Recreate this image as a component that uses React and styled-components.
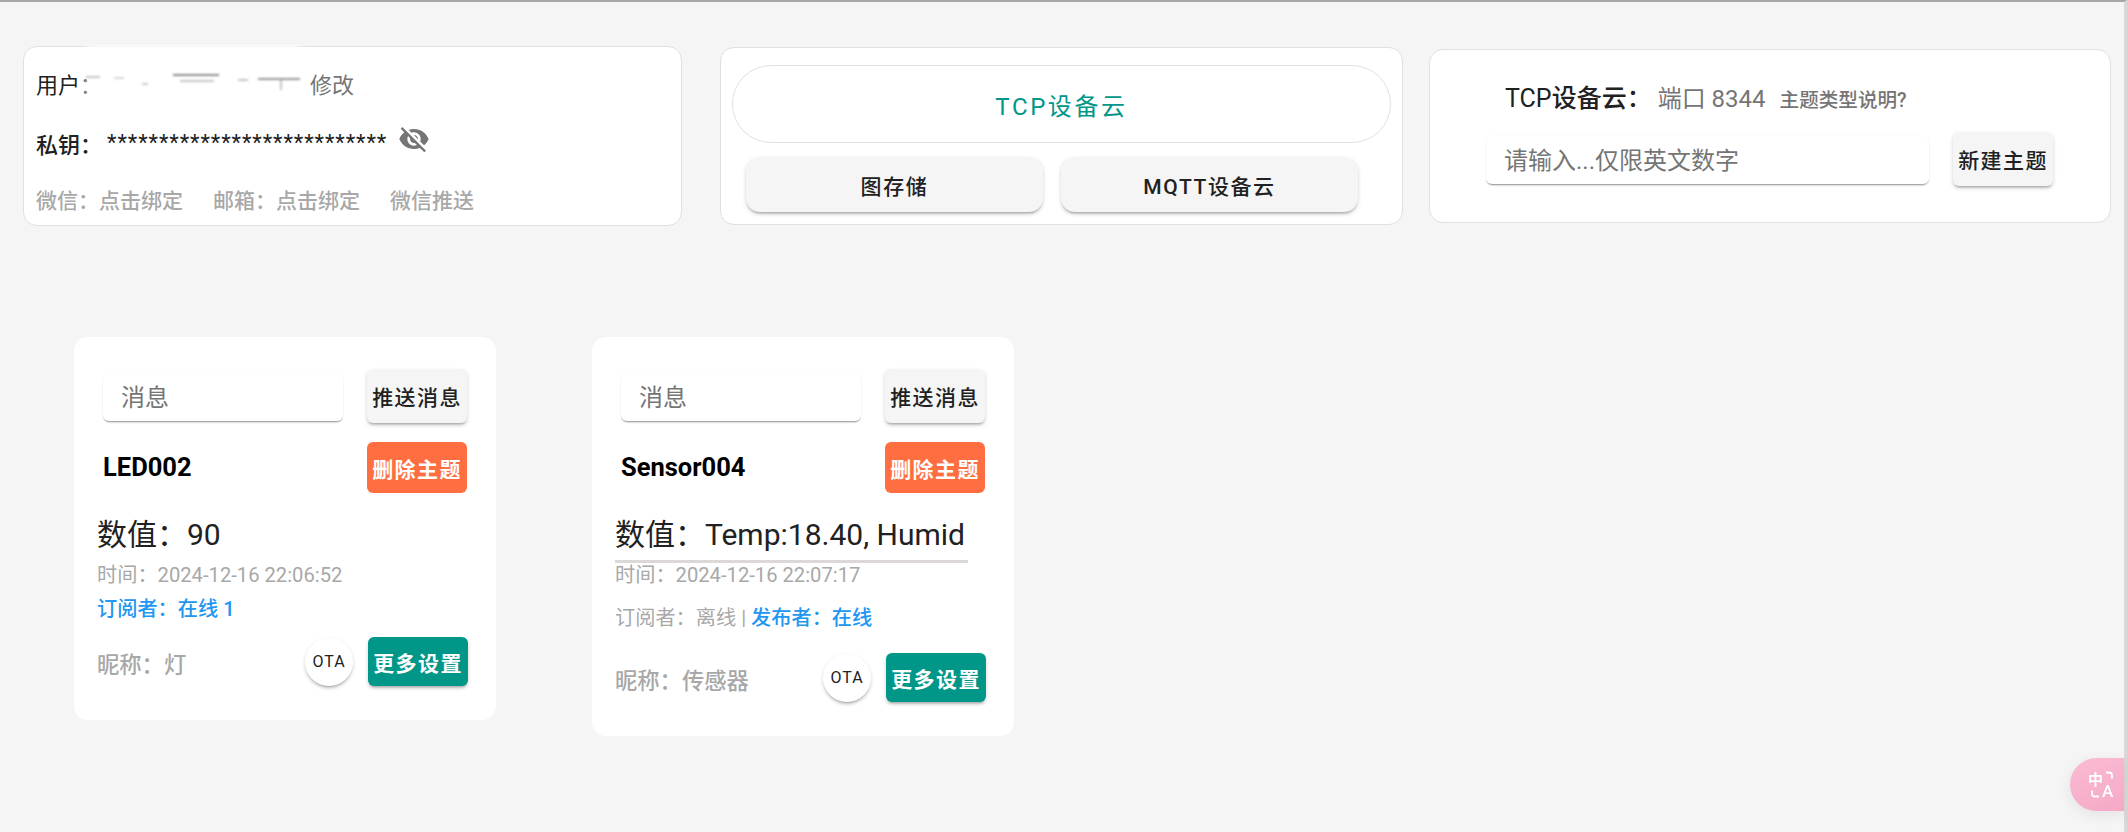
import React from "react";
import styled, { createGlobalStyle } from "styled-components";

const GlobalStyle = createGlobalStyle`
  html, body {
    margin: 0;
    padding: 0;
    height: 100%;
    overflow: hidden;
    background: #f5f5f5;
  }
  body {
    font-family: Roboto, "Noto Sans CJK SC", sans-serif;
    color: #212121;
  }
  input, button {
    font-family: inherit;
  }
`;

const Page = styled.div`
  box-sizing: border-box;
  height: 832px;
  border-top: 2px solid #a8a8a8;
  border-right: 3px solid #dcd8d8;
  background: #f5f5f5;
`;

const TopRow = styled.div`
  display: grid;
  grid-template-columns: repeat(3, 708px);
  align-items: center;
  height: 180px;
  margin-top: 44px;
`;

const TopCell = styled.div`
  padding: ${(p) => p.$pad};
`;

const Panel = styled.div`
  position: relative;
  box-sizing: border-box;
  height: ${(p) => p.$height}px;
  background: #fff;
  border: 1px solid #e0e0e0;
  border-radius: 14px;
`;

const AccountPanel = styled(Panel)`
  padding: 13px 12px;
`;

const AccountLine = styled.div`
  display: flex;
  align-items: center;
  height: 46px;
  margin-bottom: ${(p) => p.$gap}px;
  font-size: 22px;
  font-weight: ${(p) => p.$weight || 400};
`;

const UserGap = styled.span`
  width: 208px;
`;

const GrayLink = styled.span`
  color: #757575;
`;

const Smudge = styled.svg`
  position: absolute;
  left: 56px;
  top: -2px;
  width: 226px;
  height: 58px;
`;

const KeyStars = styled.span`
  margin: 0 0 0 5px;
  font-size: 22px;
  font-weight: 400;
  letter-spacing: 0.9px;
  line-height: 1;
`;

const EyeIcon = styled.svg`
  width: 32px;
  height: 32px;
  margin: -8px 0 0 11px;
  fill: #757575;
`;

const BindRow = styled.div`
  display: flex;
  gap: 30px;
  font-size: 21px;
  font-weight: 500;
  color: #a8a8a8;
`;

const CloudPanel = styled(Panel)`
  padding: 17px 11px 0;
`;

const PillTab = styled.div`
  display: flex;
  align-items: center;
  justify-content: center;
  height: 78px;
  border: 1px solid #e0e0e0;
  box-sizing: border-box;
  border-radius: 39px;
  color: #009688;
  font-size: 24px;
  letter-spacing: 2.6px;
`;

const TabRow = styled.div`
  display: flex;
  gap: 18px;
  margin: 14px 0 0 14px;
`;

const TabButton = styled.button`
  width: 297px;
  height: 55px;
  border: none;
  border-radius: 14px;
  background: #f5f5f5;
  color: #212121;
  font-size: 21px;
  font-weight: 500;
  letter-spacing: 1.6px;
  box-shadow: 0 3px 3px -2px rgba(0, 0, 0, 0.3), 0 2px 4px rgba(0, 0, 0, 0.16);
`;

const CreatePanel = styled(Panel)`
  padding: 28px 0 0 56px;
`;

const CreateTitle = styled.div`
  display: flex;
  align-items: baseline;
  height: 38px;
  margin-left: 19px;
  font-size: 25px;
  font-weight: 500;
`;

const TcpLetters = styled.span`
  font-weight: 400;
`;

const PortText = styled.span`
  margin-left: 6px;
  color: #757575;
  font-size: 24px;
  font-weight: 400;
`;

const TypeHelp = styled.span`
  margin-left: 14px;
  color: #757575;
  font-size: 19.6px;
  font-weight: 500;
`;

const CreateRow = styled.div`
  display: flex;
  align-items: center;
  gap: 24px;
  margin-top: 16px;
`;

const TextField = styled.input`
  box-sizing: border-box;
  width: ${(p) => p.$width}px;
  height: 48px;
  margin-top: 2px;
  padding: 2px 0 0 18px;
  border: none;
  border-radius: 6px;
  outline: none;
  background: #fff;
  font-size: 24px;
  box-shadow: 0 2px 2px -1px rgba(0, 0, 0, 0.45), 0 0 2px rgba(0, 0, 0, 0.06);

  &::placeholder {
    color: #757575;
    opacity: 1;
  }
`;

const ActionButton = styled.button`
  box-sizing: border-box;
  flex: none;
  width: 100px;
  height: ${(p) => p.$height || 54}px;
  padding: 0;
  border: none;
  border-radius: 6px;
  background: ${(p) => p.$bg || "#f5f5f5"};
  color: ${(p) => p.$fg || "#212121"};
  font-size: 21px;
  font-weight: ${(p) => (p.$fg ? 700 : 500)};
  letter-spacing: 1.4px;
  white-space: nowrap;
  box-shadow: ${(p) =>
    p.$flat
      ? "none"
      : "0 3px 3px -2px rgba(0, 0, 0, 0.3), 0 2px 4px rgba(0, 0, 0, 0.16)"};
`;

const TopicRow = styled.div`
  display: flex;
  align-items: flex-start;
  gap: 96px;
  margin: 111px 0 0 74px;
`;

const TopicCard = styled.div`
  box-sizing: border-box;
  width: 422px;
  padding: 32px 28px 0 23px;
  height: ${(p) => p.$height}px;
  background: #fff;
  border-radius: 14px;
`;

const MessageRow = styled.div`
  display: flex;
  align-items: center;
  justify-content: space-between;
  margin: 0 1px 0 6px;
`;

const TitleRow = styled(MessageRow)`
  margin-top: 19px;
`;

const TopicName = styled.div`
  padding-bottom: 1px;
  font-size: 25.5px;
  font-weight: 700;
  color: #000;
`;

const ValueBox = styled.div`
  box-sizing: border-box;
  width: 353px;
  height: ${(p) => (p.$scroll ? 48 : 40)}px;
  margin-top: 22px;
  font-size: 30px;
  line-height: 39px;
  white-space: nowrap;
  overflow: hidden;
  border-bottom: ${(p) => (p.$scroll ? "3px solid #dcd8d8" : "none")};
`;

const TimeLine = styled.div`
  margin-top: ${(p) => (p.$scroll ? -2 : 6)}px;
  height: 28px;
  line-height: 28px;
  font-size: 20.2px;
  color: #a8a8a8;
`;

const StatusLine = styled.div`
  margin-top: ${(p) => p.$top}px;
  height: 28px;
  line-height: 28px;
  font-size: 20.2px;
  font-weight: 400;
  color: #a8a8a8;
`;

const Online = styled.span`
  color: #2196f3;
  font-weight: 500;
`;

const BottomRow = styled.div`
  display: flex;
  align-items: center;
  margin-top: ${(p) => p.$top}px;
`;

const NickName = styled.div`
  flex: 1;
  padding-top: 2px;
  font-size: 22.3px;
  font-weight: 500;
  color: #a8a8a8;
`;

const OtaButton = styled.button`
  width: 48px;
  height: 48px;
  margin-right: 15px;
  padding: 0;
  border: none;
  border-radius: 50%;
  background: #fff;
  color: #212121;
  font-size: 16px;
  letter-spacing: 1px;
  box-shadow: 0 3px 3px -2px rgba(0, 0, 0, 0.3), 0 2px 4px rgba(0, 0, 0, 0.16);
`;

const TranslateBall = styled.div`
  position: fixed;
  right: 3px;
  top: 758px;
  width: 54px;
  height: 53px;
  display: flex;
  align-items: center;
  padding-left: 18px;
  box-sizing: border-box;
  border-radius: 27px 0 0 27px;
  background: linear-gradient(160deg, #fabbd3, #f5a9c6);
  box-shadow: 0 4px 14px rgba(0, 0, 0, 0.08);
`;

const TranslateIcon = styled.svg`
  width: 28px;
  height: 27px;
  overflow: visible;
  fill: #fff;
`;

const TopicInfo = ({ name, value, time, scroll, height, status, statusTop, nick, bottomTop }) => (
  <TopicCard $height={height}>
    <MessageRow>
      <TextField $width={240} placeholder="消息" />
      <ActionButton>推送消息</ActionButton>
    </MessageRow>
    <TitleRow>
      <TopicName>{name}</TopicName>
      <ActionButton $flat $height={51} $bg="#ff6e40" $fg="#fff">删除主题</ActionButton>
    </TitleRow>
    <ValueBox $scroll={scroll}>数值：{value}</ValueBox>
    <TimeLine $scroll={scroll}>时间：{time}</TimeLine>
    <StatusLine $top={statusTop}>{status}</StatusLine>
    <BottomRow $top={bottomTop}>
      <NickName>昵称：{nick}</NickName>
      <OtaButton>OTA</OtaButton>
      <ActionButton $height={49} $bg="#009688" $fg="#fff">更多设置</ActionButton>
    </BottomRow>
  </TopicCard>
);

export default function App() {
  return (
    <Page>
      <GlobalStyle />
      <TopRow>
        <TopCell $pad="0 26px 0 23px">
          <AccountPanel $height={180}>
            <Smudge viewBox="0 0 226 58">
              <defs>
                <filter id="soft"><feGaussianBlur stdDeviation="1.1" /></filter>
                <filter id="wide"><feGaussianBlur stdDeviation="3" /></filter>
              </defs>
              <rect x="6" y="0" width="214" height="54" fill="#fff" filter="url(#wide)" />
              <g filter="url(#soft)" fill="#8c8c8c">
                <rect x="6" y="31" width="14" height="2" opacity="0.5" />
                <rect x="34" y="32" width="10" height="2" opacity="0.35" />
                <rect x="62" y="38" width="6" height="2" opacity="0.45" />
                <rect x="93" y="29" width="46" height="2" />
                <rect x="100" y="35" width="34" height="2" opacity="0.5" />
                <rect x="158" y="34" width="10" height="2" opacity="0.5" />
                <rect x="178" y="33" width="42" height="2" opacity="0.9" />
                <rect x="200" y="35" width="2" height="10" opacity="0.5" />
              </g>
            </Smudge>
            <AccountLine $gap={14}>
              用户：<UserGap /><GrayLink>修改</GrayLink>
            </AccountLine>
            <AccountLine $gap={18} $weight={500}>
              私钥：
              <KeyStars>***************************</KeyStars>
              <EyeIcon viewBox="0 0 24 24">
                <path d="M12 7c2.76 0 5 2.24 5 5 0 .65-.13 1.26-.36 1.83l2.92 2.92c1.51-1.26 2.7-2.89 3.43-4.75-1.73-4.39-6-7.5-11-7.5-1.4 0-2.74.25-3.98.7l2.16 2.16C10.74 7.13 11.35 7 12 7zM2 4.27l2.28 2.28.46.46C3.08 8.3 1.78 10.02 1 12c1.73 4.39 6 7.5 11 7.5 1.55 0 3.03-.3 4.38-.84l.42.42L19.73 22 21 20.73 3.27 3 2 4.27zM7.53 9.8l1.55 1.55c-.05.21-.08.43-.08.65 0 1.66 1.34 3 3 3 .22 0 .44-.03.65-.08l1.55 1.55c-.67.33-1.41.53-2.2.53-2.76 0-5-2.24-5-5 0-.79.2-1.53.53-2.2zm4.31-.78l3.15 3.15.02-.16c0-1.66-1.34-3-3-3l-.17.01z" />
              </EyeIcon>
            </AccountLine>
            <BindRow>
              <span>微信：点击绑定</span>
              <span>邮箱：点击绑定</span>
              <span>微信推送</span>
            </BindRow>
          </AccountPanel>
        </TopCell>
        <TopCell $pad="0 13px 0 12px">
          <CloudPanel $height={178}>
            <PillTab>TCP设备云</PillTab>
            <TabRow>
              <TabButton>图存储</TabButton>
              <TabButton>MQTT设备云</TabButton>
            </TabRow>
          </CloudPanel>
        </TopCell>
        <TopCell $pad="0 13px">
          <CreatePanel $height={174}>
            <CreateTitle>
              <TcpLetters>TCP</TcpLetters>设备云：
              <PortText>端口 8344</PortText>
              <TypeHelp>主题类型说明?</TypeHelp>
            </CreateTitle>
            <CreateRow>
              <TextField $width={443} placeholder="请输入...仅限英文数字" />
              <ActionButton>新建主题</ActionButton>
            </CreateRow>
          </CreatePanel>
        </TopCell>
      </TopRow>
      <TopicRow>
        <TopicInfo
          name="LED002"
          value="90"
          time="2024-12-16 22:06:52"
          height={383}
          status={<Online>订阅者：在线 1</Online>}
          statusTop={6}
          nick="灯"
          bottomTop={14}
        />
        <TopicInfo
          name="Sensor004"
          value="Temp:18.40, Humid"
          time="2024-12-16 22:07:17"
          scroll
          height={399}
          status={<>订阅者：离线 | <Online>发布者：在线</Online></>}
          statusTop={15}
          nick="传感器"
          bottomTop={21}
        />
      </TopicRow>
      <TranslateBall>
        <TranslateIcon viewBox="0 0 28 27">
          <text x="0" y="14" fontSize="15" fontWeight="700" fontFamily="'Noto Sans CJK SC', sans-serif">中</text>
          <text x="14" y="26" fontSize="17" fontWeight="500" fontFamily="Roboto, sans-serif">A</text>
          <path d="M18 1.5h3a3 3 0 0 1 3 3v3" fill="none" stroke="#fff" strokeWidth="1.8" />
          <path d="M11 25.5H7a3 3 0 0 1-3-3v-3" fill="none" stroke="#fff" strokeWidth="1.8" />
        </TranslateIcon>
      </TranslateBall>
    </Page>
  );
}
